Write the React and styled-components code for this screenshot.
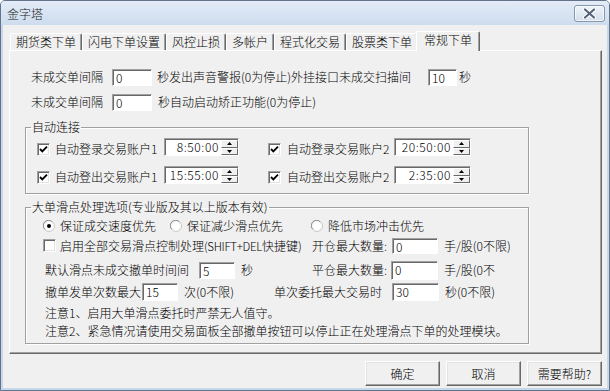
import React from "react";
import styled, { createGlobalStyle } from "styled-components";

const Global = createGlobalStyle`
  html, body { margin: 0; padding: 0; background: #ffffff; }
  body {
    font-family: "Noto Sans CJK SC", "Liberation Sans", sans-serif;
    font-size: 12px;
    font-weight: 300;
    color: #000;
  }
  * { box-sizing: border-box; }
`;

const Window = styled.div`
  width: 610px;
  height: 391px;
  display: flex;
  flex-direction: column;
  border: 1px solid #62738a;
  border-radius: 5px 5px 0 0;
  background: #c8d8eb;
  overflow: hidden;
`;

const TitleBar = styled.div`
  height: 24px;
  flex: none;
  display: flex;
  align-items: flex-start;
  padding: 0 4px 0 6px;
  background: linear-gradient(#e3ecf7, #cddcee);
`;

const TitleText = styled.div`
  line-height: 16px;
  margin-top: 5px;
  color: #1b1b1b;
`;

const CloseBtn = styled.div`
  margin-left: auto;
  margin-top: 4px;
  width: 31px;
  height: 17px;
  border: 1px solid #8596ad;
  border-radius: 3px;
  background: linear-gradient(#eef3f9, #d3dfec);
  box-shadow: inset 0 0 0 1px rgba(255, 255, 255, 0.7);
  display: flex;
  align-items: center;
  justify-content: center;
`;

const Client = styled.div`
  flex: 1;
  margin: 0 2px 2px;
  background: #f0f0f0;
  display: flex;
  flex-direction: column;
`;

const TabStrip = styled.div`
  height: 25px;
  flex: none;
  display: flex;
  align-items: flex-end;
  padding-left: 7px;
  position: relative;
  z-index: 2;
`;

const Tab = styled.div`
  height: ${(p) => (p.$active ? 20 : 17)}px;
  margin: 0 ${(p) => (p.$active ? -2 : 0)}px ${(p) => (p.$active ? -1 : 0)}px;
  padding: 0 ${(p) => (p.$active ? 7 : 5)}px;
  line-height: 16px;
  white-space: nowrap;
  background: #f0f0f0;
  border-top: 1px solid #ffffff;
  border-left: 1px solid #ffffff;
  border-right: 1px solid #696969;
  border-radius: 2px 2px 0 0;
  box-shadow: inset -1px 0 0 #a0a0a0;
  position: relative;
  z-index: ${(p) => (p.$active ? 3 : 1)};
`;

const Panel = styled.div`
  height: 304px;
  flex: none;
  margin: 0 5px 0 6px;
  border: 1px solid;
  border-color: #ffffff #696969 #696969 #ffffff;
  box-shadow: inset -1px -1px 0 #a0a0a0;
  display: flex;
  flex-direction: column;
  position: relative;
  z-index: 1;
`;

const Row = styled.div`
  display: flex;
  align-items: ${(p) => p.$align || "center"};
  height: ${(p) => p.$h || 20}px;
  margin-top: ${(p) => p.$mt || 0}px;
  padding-left: ${(p) => p.$pl || 0}px;
  white-space: nowrap;
  flex: none;
`;

const Text = styled.span`
  display: inline-block;
  flex: none;
  line-height: 14px;
  width: ${(p) => (p.$w ? `${p.$w}px` : "auto")};
  margin-left: ${(p) => p.$ml || 0}px;
  overflow: visible;
  white-space: nowrap;
`;

const Latin = styled.span`
  font-size: 11.5px;
  letter-spacing: -0.3px;
`;

const Field = styled.div`
  flex: none;
  width: ${(p) => p.$w}px;
  height: ${(p) => p.$h || 17}px;
  margin-left: ${(p) => p.$ml || 0}px;
  background: #ffffff;
  border: 1px solid;
  border-color: #a0a0a0 #ffffff #ffffff #a0a0a0;
  box-shadow: inset 1px 1px 0 #696969;
  padding: 1px 0 0 3px;
  line-height: 13px;
  font-size: 12px;
`;

const Group = styled.fieldset`
  margin: ${(p) => p.$mt || 0}px 0 0 15px;
  width: 504px;
  padding: 0 0 ${(p) => p.$pb || 0}px 0;
  border: 1px solid #a0a0a0;
  box-shadow: inset 1px 1px 0 #ffffff, 1px 1px 0 #ffffff;
  min-width: 0;
  flex: none;
`;

const Legend = styled.legend`
  margin-left: 5px;
  padding: 0 1px;
  line-height: 16px;
  font-size: 12px;
`;

const CheckBox = styled.span`
  flex: none;
  width: 13px;
  height: 13px;
  background: #ffffff;
  border: 1px solid;
  border-color: #a0a0a0 #ffffff #ffffff #a0a0a0;
  box-shadow: inset 1px 1px 0 #696969, inset -1px -1px 0 #e3e3e3;
  display: flex;
  align-items: center;
  justify-content: center;
  margin-right: ${(p) => p.$gap || 5}px;
`;

const TimeBox = styled.div`
  flex: none;
  width: ${(p) => p.$w}px;
  height: 18px;
  display: flex;
  background: #ffffff;
  border: 1px solid;
  border-color: #a0a0a0 #ffffff #ffffff #a0a0a0;
  box-shadow: inset 1px 1px 0 #696969;
`;

const TimeText = styled.div`
  flex: 1;
  text-align: right;
  padding: 1px 2px 0 0;
  line-height: 14px;
  letter-spacing: 0.6px;
`;

const Spin = styled.div`
  width: 17px;
  flex: none;
  display: flex;
  flex-direction: column;
  padding-top: 1px;
`;

const SpinBtn = styled.div`
  flex: 1;
  background: #f0f0f0;
  border: 1px solid;
  border-color: #ffffff #696969 #696969 #ffffff;
  display: flex;
  align-items: center;
  justify-content: center;
`;

const RadioItem = styled.div`
  flex: none;
  display: flex;
  align-items: center;
  width: ${(p) => (p.$w ? `${p.$w}px` : "auto")};
`;

const Buttons = styled.div`
  display: flex;
  justify-content: flex-end;
  gap: 6px;
  margin-top: 7px;
  padding-right: 5px;
`;

const Button = styled.div`
  width: 75px;
  height: 25px;
  background: #f0f0f0;
  border: 1px solid;
  border-color: #ffffff #696969 #696969 #ffffff;
  box-shadow: inset -1px -1px 0 #a0a0a0, inset 1px 1px 0 #e3e3e3;
  display: flex;
  align-items: center;
  justify-content: center;
  line-height: 14px;
`;

const Check = ({ gap }) => (
  <CheckBox $gap={gap}>
    <svg width="9" height="9" viewBox="0 0 9 9">
      <path d="M1 4 L3.3 6.3 L8 1.6" fill="none" stroke="#000" strokeWidth="1.9" />
    </svg>
  </CheckBox>
);

const EmptyCheck = ({ gap }) => <CheckBox $gap={gap} />;

const Radio = ({ on }) => (
  <svg width="12" height="12" viewBox="0 0 12 12" style={{ flex: "none", marginRight: 5 }}>
    <circle cx="6" cy="6" r="5.5" fill="#ffffff" stroke="#c8c8c8" />
    <path d="M1.8 9.2 A4.6 4.6 0 0 1 9.2 1.8" fill="none" stroke="#8e8e8e" strokeWidth="1" />
    <circle cx="6" cy="6" r="4.3" fill="none" stroke="#f4f4f4" />
    {on && <circle cx="6" cy="6" r="2" fill="#000" />}
  </svg>
);

const Arrow = ({ up }) => (
  <svg width="5" height="3" viewBox="0 0 5 3">
    <path d={up ? "M0 3 L2.5 0 L5 3 Z" : "M0 0 L2.5 3 L5 0 Z"} fill="#000" />
  </svg>
);

const Time = ({ value, w }) => (
  <TimeBox $w={w}>
    <TimeText>{value}</TimeText>
    <Spin>
      <SpinBtn>
        <Arrow up />
      </SpinBtn>
      <SpinBtn>
        <Arrow />
      </SpinBtn>
    </Spin>
  </TimeBox>
);

const tabs = ["期货类下单", "闪电下单设置", "风控止损", "多帐户", "程式化交易", "股票类下单", "常规下单"];

export default function App() {
  return (
    <>
      <Global />
      <Window>
        <TitleBar>
          <TitleText>金字塔</TitleText>
          <CloseBtn>
            <svg width="15" height="11" viewBox="0 0 15 11">
              <path d="M3 1.5 L12 9.5 M12 1.5 L3 9.5" stroke="#ffffff" strokeWidth="4.2" strokeLinecap="round" />
              <path d="M3 1.5 L12 9.5 M12 1.5 L3 9.5" stroke="#56647a" strokeWidth="2.2" strokeLinecap="round" />
            </svg>
          </CloseBtn>
        </TitleBar>
        <Client>
          <TabStrip>
            {tabs.map((t, i) => (
              <Tab key={t} $active={i === tabs.length - 1}>
                {t}
              </Tab>
            ))}
          </TabStrip>
          <Panel>
            <Row $mt={16} $pl={21}>
              <Text $w={81}>未成交单间隔</Text>
              <Field $w={40}>0</Field>
              <Text $ml={5} $w={271}>秒发出声音警报(0为停止)外挂接口未成交扫描间</Text>
              <Field $w={29}>10</Field>
              <Text $ml={2}>秒</Text>
            </Row>
            <Row $mt={5} $pl={21}>
              <Text $w={81}>未成交单间隔</Text>
              <Field $w={40}>0</Field>
              <Text $ml={6}>秒自动启动矫正功能(0为停止)</Text>
            </Row>

            <Group $mt={7} $pb={9}>
              <Legend>自动连接</Legend>
              <Row $mt={3} $h={18} $pl={11} $align="flex-end">
                <Check />
                <Text $w={109}>自动登录交易账户1</Text>
                <Time w={75} value="8:50:00" />
                <Text $w={29} />
                <Check gap={6} />
                <Text $w={107}>自动登录交易账户2</Text>
                <Time w={77} value="20:50:00" />
              </Row>
              <Row $mt={10} $h={18} $pl={11} $align="flex-end">
                <Check />
                <Text $w={109}>自动登出交易账户1</Text>
                <Time w={75} value="15:55:00" />
                <Text $w={29} />
                <Check gap={6} />
                <Text $w={107}>自动登出交易账户2</Text>
                <Time w={77} value="2:35:00" />
              </Row>
            </Group>

            <Group $mt={5} $pb={4}>
              <Legend>大单滑点处理选项(专业版及其以上版本有效)</Legend>
              <Row $mt={2} $h={18} $pl={17}>
                <RadioItem $w={127}>
                  <Radio on />
                  <Text>保证成交速度优先</Text>
                </RadioItem>
                <RadioItem $w={141}>
                  <Radio />
                  <Text>保证减少滑点优先</Text>
                </RadioItem>
                <RadioItem>
                  <Radio />
                  <Text>降低市场冲击优先</Text>
                </RadioItem>
              </Row>
              <Row $mt={2} $h={17} $pl={17}>
                <EmptyCheck gap={4} />
                <Text $w={252}>
                  启用全部交易滑点控制处理<Latin>(SHIFT+DEL</Latin>快捷键)
                </Text>
                <Text $w={80}>开仓最大数量:</Text>
                <Field $w={46} $h={16}>0</Field>
                <Text $ml={6}>手/股(0不限)</Text>
              </Row>
              <Row $mt={6} $h={20} $pl={19}>
                <Text $w={154}>默认滑点未成交撤单时间间</Text>
                <Field $w={36}>5</Field>
                <Text $ml={6} $w={71}>秒</Text>
                <Text $w={79}>平仓最大数量:</Text>
                <Field $w={47} $h={19}>0</Field>
                <Text $ml={6}>手/股(0不</Text>
              </Row>
              <Row $mt={2} $h={20} $pl={19}>
                <Text $w={97}>撤单发单次数最大</Text>
                <Field $w={36} $h={18}>15</Field>
                <Text $ml={6} $w={90}>次(0不限)</Text>
                <Text $w={118}>单次委托最大交易时</Text>
                <Field $w={47} $h={18}>30</Field>
                <Text $ml={6}>秒(0不限)</Text>
              </Row>
              <Row $mt={3} $h={16} $pl={19}>
                <Text>注意1、启用大单滑点委托时严禁无人值守。</Text>
              </Row>
              <Row $mt={2} $h={16} $pl={19}>
                <Text>注意2、紧急情况请使用交易面板全部撤单按钮可以停止正在处理滑点下单的处理模块。</Text>
              </Row>
            </Group>
          </Panel>
          <Buttons>
            <Button>确定</Button>
            <Button>取消</Button>
            <Button>需要帮助?</Button>
          </Buttons>
        </Client>
      </Window>
    </>
  );
}
